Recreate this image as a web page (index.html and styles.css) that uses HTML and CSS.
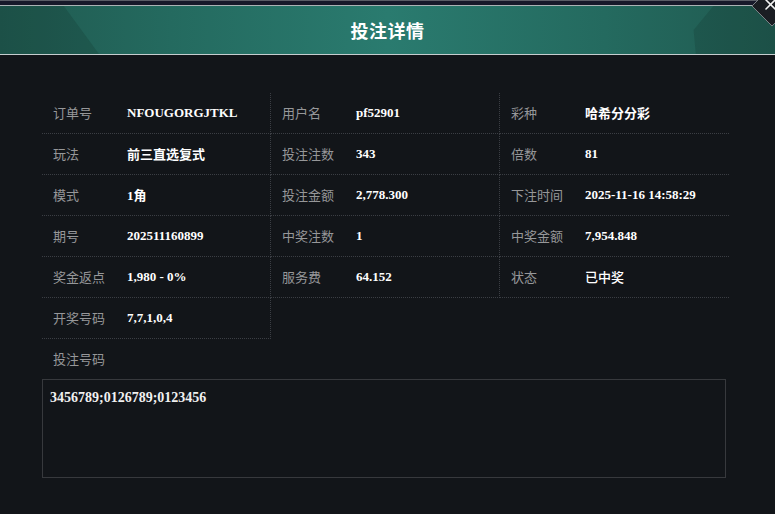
FILE: index.html
```html
<!DOCTYPE html>
<html lang="zh-CN">
<head>
    <meta charset="UTF-8">
    <meta name="viewport" content="width=device-width, initial-scale=1.0">
    <title>投注详情</title>
    <link rel="stylesheet" href="styles.css">
</head>
<body>
    <div class="modal">
        <div class="topbar"></div>
        <div class="header">
            <h2>投注详情</h2>
            <a class="close" href="#" aria-label="关闭">
                <svg width="46" height="34" viewBox="0 0 46 34">
                    <path d="M6 6 L26 -14 L46 6 L26 26 Z" fill="#1a1d22" stroke="#7b8085" stroke-width="1"/>
                    <path d="M20 0 L29 9 M29 0 L20 9" stroke="#f2f2f2" stroke-width="1.6" stroke-linecap="round"/>
                </svg>
            </a>
        </div>
        <div class="content">
            <div class="info-grid">
                <div class="cell"><span class="label">订单号</span><span class="value">NFOUGORGJTKL</span></div>
                <div class="cell"><span class="label">用户名</span><span class="value">pf52901</span></div>
                <div class="cell"><span class="label">彩种</span><span class="value cn">哈希分分彩</span></div>

                <div class="cell"><span class="label">玩法</span><span class="value cn">前三直选复式</span></div>
                <div class="cell"><span class="label">投注注数</span><span class="value">343</span></div>
                <div class="cell"><span class="label">倍数</span><span class="value">81</span></div>

                <div class="cell"><span class="label">模式</span><span class="value cn">1角</span></div>
                <div class="cell"><span class="label">投注金额</span><span class="value">2,778.300</span></div>
                <div class="cell"><span class="label">下注时间</span><span class="value">2025-11-16 14:58:29</span></div>

                <div class="cell"><span class="label">期号</span><span class="value">202511160899</span></div>
                <div class="cell"><span class="label">中奖注数</span><span class="value">1</span></div>
                <div class="cell"><span class="label">中奖金额</span><span class="value">7,954.848</span></div>

                <div class="cell"><span class="label">奖金返点</span><span class="value">1,980 - 0%</span></div>
                <div class="cell"><span class="label">服务费</span><span class="value">64.152</span></div>
                <div class="cell"><span class="label">状态</span><span class="value cn status">已中奖</span></div>

                <div class="cell"><span class="label">开奖号码</span><span class="value">7,7,1,0,4</span></div>
            </div>
            <div class="code-label">投注号码</div>
            <div class="code-box">3456789;0126789;0123456</div>
        </div>
    </div>
</body>
</html>
```

FILE: styles.css
```css
body {margin: 0; background-color: #121519; overflow: hidden;
    font-family: "Noto Sans CJK SC", "Noto Sans", sans-serif;
}
.modal {width: 775px; height: 514px; background-color: #121519;}

.topbar {height: 4px; background-color: #17192a; border-top: 1px solid #5a5d66;}

.header {position: relative; height: 48px; display: flex; align-items: center; justify-content: center;
    border-top: 1px solid #aab2b4; border-bottom: 1px solid #c6cdcf;
    background: linear-gradient(90deg, #205a50 0%, #246a5f 22%, #2a7b6f 50%, #246a5f 78%, #205a50 100%);
}
/* the two dark facets at the ends of the title bar */
.header::before, .header::after {content: ""; position: absolute; top: 0; bottom: 0; width: 110px;
    background-color: rgba(10, 30, 26, 0.16);}
.header::before {left: 0; clip-path: polygon(0 0, 58% 0, 90% 100%, 0 100%);}
.header::after {right: 0; clip-path: polygon(44% 0, 100% 0, 100% 100%, 28% 100%, 26% 50%);}
.header h2 {margin: 0; position: relative; z-index: 1; color: #fff; font-size: 18px; font-weight: bold; letter-spacing: 0.5px;}

.close {position: absolute; top: -6px; right: -17px; z-index: 2; display: block; width: 46px; height: 34px;}
.close svg {display: block;}

.content {padding: 38px 0 0 42px;}

.info-grid {display: grid; grid-template-columns: repeat(3, 229px); width: 687px;}
.cell {display: flex; align-items: center; height: 40px; padding-left: 11px;
    border-bottom: 1px dotted #3b3e44;}
.cell:nth-child(3n+1), .cell:nth-child(3n+2) {border-right: 1px dotted #3b3e44;}
.cell:nth-child(3n+1) {width: 217px;}
.label {position: relative; top: -1px; width: 74px; flex-shrink: 0; color: #969799; font-size: 13px;}
.value {color: #fff; font-size: 13px; font-weight: bold;
    font-family: "Liberation Serif", "Noto Sans CJK SC", serif;}
.value.cn {position: relative; top: -1px;}
.status {font-weight: 500;}

.code-label {height: 40px; line-height: 40px; padding-left: 11px; color: #969799; font-size: 13px;}
.code-box {width: 668px; height: 79px; padding: 10px 7px 8px 7px; border: 1px solid #37393d;
    color: #f0f0f0; font-size: 14px; font-weight: bold;
    font-family: "Liberation Serif", "Noto Sans CJK SC", serif;}
```
